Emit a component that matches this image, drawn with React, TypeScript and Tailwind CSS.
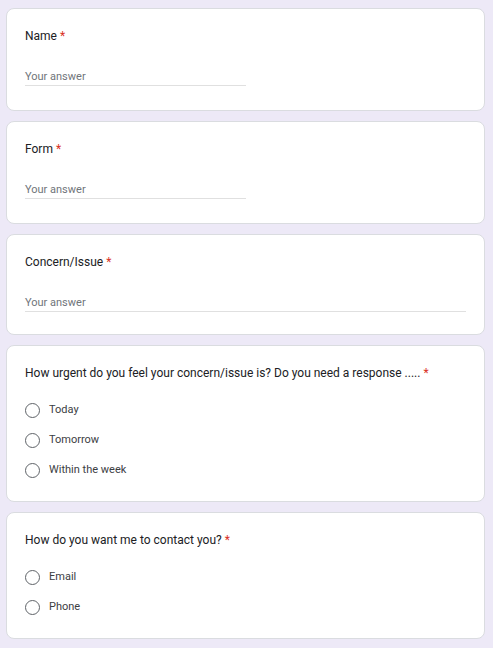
const Star = () => <span className="text-[#d93025] ml-[3px]">*</span>

const Card = ({ children }: { children: React.ReactNode }) => (
  <div className="bg-white border border-[#dadce0] rounded-lg px-[18px] pt-[19px]">{children}</div>
)

const TextQuestion = ({ title, full }: { title: string; full?: boolean }) => (
  <Card>
    <div className="text-[12px] leading-4 text-[#202124]">
      {title}
      <Star />
    </div>
    <div className={`mt-6 pb-[1px] border-b border-[#e0e0e0] ${full ? 'w-full' : 'w-1/2'}`}>
      <div className="text-[11px] leading-4 text-[#70757a] translate-y-[1px]">Your answer</div>
    </div>
    <div className={full ? 'h-[22px]' : 'h-6'} />
  </Card>
)

const RadioQuestion = ({ title, options }: { title: string; options: string[] }) => (
  <Card>
    <div className="text-[12px] leading-4 text-[#202124]">
      {title}
      <Star />
    </div>
    <div className="mt-[14px] pb-[16px] flex flex-col">
      {options.map((o) => (
        <div key={o} className="h-[30px] flex items-center">
          <span className="w-[15px] h-[15px] rounded-full border-[1.5px] border-[#5f6368]" />
          <span className="ml-[9px] text-[11px] text-[#3c4043]">{o}</span>
        </div>
      ))}
    </div>
  </Card>
)

export default function App() {
  return (
    <div
      className="min-h-[648px] bg-[#ede9f7] pl-[6px] pr-[8px] pt-2 pb-2 flex flex-col gap-[10px]"
      style={{ fontFamily: 'Roboto, "Noto Sans", Arial, sans-serif' }}
    >
      <TextQuestion title="Name" />
      <TextQuestion title="Form" />
      <TextQuestion title="Concern/Issue" full />
      <RadioQuestion
        title="How urgent do you feel your concern/issue is? Do you need a response ....."
        options={['Today', 'Tomorrow', 'Within the week']}
      />
      <RadioQuestion title="How do you want me to contact you?" options={['Email', 'Phone']} />
    </div>
  )
}
